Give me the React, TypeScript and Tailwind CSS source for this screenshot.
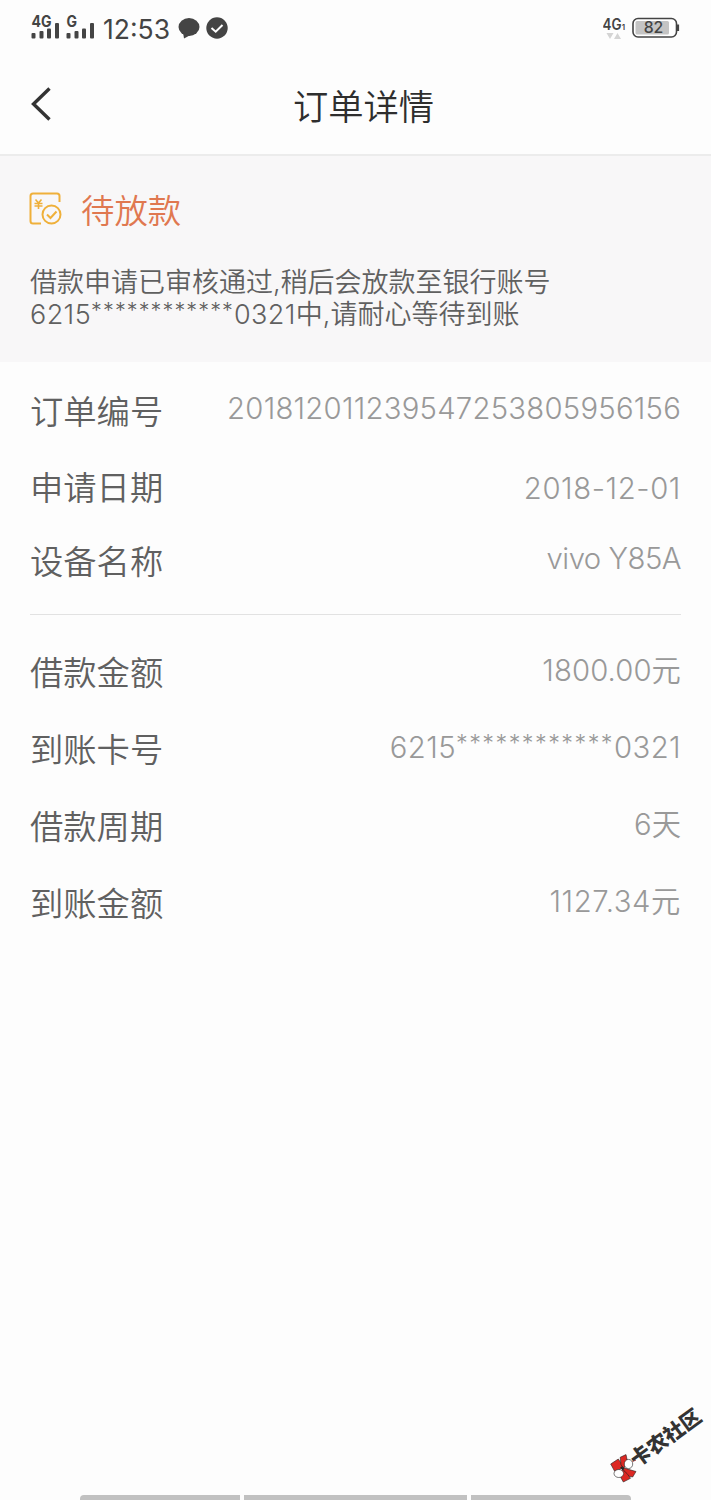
import React from 'react';

interface DetailRow {
    label: string;
    value: React.ReactNode;
    rowClass: string;
    valueClass: string;
}

const MaskedCard: React.FC<{ starClass: string }> = ({ starClass }) => (
    <>
        6215<span className={`relative -top-[0.16em] align-[0.14em] text-[0.8em] leading-none ${starClass}`}>************</span>0321
    </>
);

const orderRows: DetailRow[] = [
    { label: '订单编号', value: '201812011239547253805956156', rowClass: 'h-[76px]', valueClass: '-mt-1 tracking-[0.24px]' },
    { label: '申请日期', value: '2018-12-01', rowClass: 'h-[76px]', valueClass: 'mt-1 tracking-[0.6px]' },
    { label: '设备名称', value: 'vivo Y85A', rowClass: 'h-[72px]', valueClass: '-mt-1 tracking-[-0.5px]' },
];

const loanRows: DetailRow[] = [
    { label: '借款金额', value: '1800.00元', rowClass: 'h-[77px]', valueClass: '-mt-1 tracking-[0.1px]' },
    { label: '到账卡号', value: <MaskedCard starClass="tracking-[1.45px]" />, rowClass: 'h-[77px]', valueClass: '-mt-1 tracking-[0.4px]' },
    { label: '借款周期', value: '6天', rowClass: 'h-[77px]', valueClass: '-mt-1' },
    { label: '到账金额', value: '1127.34元', rowClass: 'h-[77px]', valueClass: '-mt-1 tracking-[0.6px]' },
];

const DetailList: React.FC<{ rows: DetailRow[] }> = ({ rows }) => (
    <div>
        {rows.map((row) => (
            <div key={row.label} className={`flex items-center justify-between ${row.rowClass}`}>
                <span className="mt-[3px] text-[33.3px] leading-none font-[350] text-[#606060]">{row.label}</span>
                <span className={`text-[29.3px] leading-none font-[330] whitespace-nowrap text-[#999] ${row.valueClass}`}>
                    {row.value}
                </span>
            </div>
        ))}
    </div>
);

const Signal: React.FC<{ label: string; textWidth: number }> = ({ label, textWidth }) => (
    <svg width="30" height="34" viewBox="0 0 30 34" fill="#444">
        <text x="0.5" y="15.8" fontSize="15.5" fontWeight="700" textLength={textWidth} lengthAdjust="spacingAndGlyphs">
            {label}
        </text>
        <rect x="0.5" y="22" width="4" height="5.5" rx="1" />
        <rect x="8.5" y="20" width="4" height="7.5" rx="1" />
        <rect x="16" y="17.5" width="4" height="10" rx="1" />
        <rect x="24" y="12" width="4" height="15.5" rx="1" />
    </svg>
);

const StatusBar: React.FC = () => (
    <div className="flex h-[55px] items-center justify-between px-[31px] text-[#444]">
        <div className="flex items-center">
            <Signal label="4G" textWidth={20} />
            <span className="ml-[5px] flex">
                <Signal label="G" textWidth={10.5} />
            </span>
            <span className="mt-[3px] ml-[7px] text-[26.5px] leading-none">12:53</span>
            <svg className="ml-[8px]" width="22" height="22" viewBox="0 0 22 22" fill="#444">
                <ellipse cx="11" cy="10" rx="10.5" ry="9" />
                <path d="M5 15 L6 21.5 L12.5 18 Z" />
            </svg>
            <svg className="ml-[6px]" width="22" height="22" viewBox="0 0 22 22">
                <circle cx="11" cy="11" r="10.7" fill="#444" />
                <path d="M5.5 11 L9.7 14.7 L16.5 8" fill="none" stroke="#fff" strokeWidth="2" />
            </svg>
        </div>
        <div className="flex items-center">
            <svg width="24" height="28" viewBox="0 0 24 28" fill="#444">
                <text x="-0.5" y="15.8" fontSize="15.5" fontWeight="600" textLength="19" lengthAdjust="spacingAndGlyphs">4G</text>
                <text x="18.8" y="15.8" fontSize="8" fontWeight="600">1</text>
                <path d="M3.5 19 H10.5 L7 25 Z M11 25 L14.5 19 L18 25 Z" fill="#d4d4d4" />
            </svg>
            <svg className="ml-[5px]" width="48" height="22" viewBox="0 0 48 22">
                <rect x="1" y="1.5" width="43.5" height="18.5" rx="5" fill="#fff" stroke="#444" strokeWidth="1.6" />
                <rect x="3.5" y="4" width="33.5" height="13.5" rx="1.5" fill="#c4c4c4" />
                <path d="M46 7.5 V14" stroke="#444" strokeWidth="2.2" />
                <text x="21.5" y="16.3" fontSize="15.8" fontWeight="500" textAnchor="middle" fill="#444">82</text>
            </svg>
        </div>
    </div>
);

const StatusIcon: React.FC = () => (
    <svg width="34" height="34" viewBox="0 0 34 34" fill="none" stroke="#efb03a" strokeWidth="2">
        <path d="M12 31.5 H4 Q1.5 31.5 1.5 29 V4 Q1.5 1.5 4 1.5 H28 Q30.5 1.5 30.5 4 V10" />
        <circle cx="22.5" cy="22.5" r="9" />
        <path d="M18 22.5 L21.5 26 L27.5 19.5" />
        <path d="M6.5 7.5 L9.5 11 L12.5 7.5 M9.5 11 V17 M5.5 11.5 H13.5 M5.5 14 H13.5" strokeWidth="1.6" />
    </svg>
);

const Watermark: React.FC = () => (
    <div className="absolute right-0 bottom-0 h-[100px] w-[110px]">
        <svg className="absolute top-[52px] left-[8px]" width="31" height="31" viewBox="0 0 31 31" stroke="#222" strokeWidth="0.6">
            <g fill="#dc2823">
                <path d="M1.7 12 L9.3 7 L14 14 L11 17.5 L5.5 19 Z" />
                <path d="M11.2 5.3 L17 2.6 L18.2 8 L15 16 L12 13 Z" />
                <path d="M14 15.5 L21 17.8 L27 19.5 L23.7 25 L16 23.5 Z" />
                <path d="M11 24 L13.5 17.5 L18 21.5 L21.5 26.3 L14.3 30 Z" />
            </g>
            <ellipse cx="19.5" cy="12" rx="4.2" ry="4.6" fill="#fff" />
            <ellipse cx="9.8" cy="21.5" rx="4.8" ry="4" fill="#fff" />
            <path d="M12 15 L14.5 17.5" strokeWidth="2.4" />
            <path d="M23.5 9.5 L27 8" stroke="#a33" strokeWidth="1" />
        </svg>
        <span className="absolute top-[28px] left-[24px] origin-center -rotate-36 text-[20.5px] leading-none font-black whitespace-nowrap text-[#333]">
            卡农社区
        </span>
    </div>
);

export default function App() {
    return (
        <div className="relative flex h-[1500px] w-full flex-col overflow-hidden bg-[#fdfdfd] font-['Inter','Noto_Sans_CJK_SC',sans-serif]">
            <StatusBar />

            {/* Title bar */}
            <header className="grid h-[101px] grid-cols-[1fr_auto_1fr] items-center border-b-2 border-[#ececec] px-[31px]">
                <svg className="-mt-[2px]" width="22" height="36" viewBox="0 0 22 36" fill="none" stroke="#333" strokeWidth="3.4">
                    <path d="M18.5 2.5 L2.5 18 L18.5 33.5" />
                </svg>
                <h1 className="mt-[7px] ml-[16px] text-[35.3px] leading-none font-[350] text-[#2e2e2e]">订单详情</h1>
            </header>

            {/* Loan status */}
            <section className="h-[206px] bg-[#f8f7f8] pt-[36px] pl-[29px]">
                <div className="flex h-[34px] items-center">
                    <StatusIcon />
                    <span className="mt-[5px] ml-[18px] text-[33.4px] leading-none font-[350] text-[#e07850]">待放款</span>
                </div>
                <p className="mt-[41px] ml-px text-[27px] leading-8 font-[350] whitespace-nowrap text-[#606060]">
                    借款申请已审核通过,稍后会放款至银行账号
                    <br />
                    <span className="tracking-[0.4px]">
                        <MaskedCard starClass="tracking-[1.1px]" />
                    </span>
                    中,请耐心等待到账
                </p>
            </section>

            {/* Order details */}
            <main className="px-[30px] pt-[11px]">
                <DetailList rows={orderRows} />
                <hr className="mt-[17px] mb-[19px] border-[#e2e2e2]" />
                <DetailList rows={loanRows} />
            </main>

            {/* Gesture bars */}
            <footer className="mt-auto flex h-[5px] gap-1 px-20">
                <div className="w-[160px] rounded-tl-sm bg-[#c1c1c1]" />
                <div className="flex-1 bg-[#c1c1c1]" />
                <div className="w-[160px] rounded-tr-sm bg-[#c1c1c1]" />
            </footer>

            <Watermark />
        </div>
    );
}
